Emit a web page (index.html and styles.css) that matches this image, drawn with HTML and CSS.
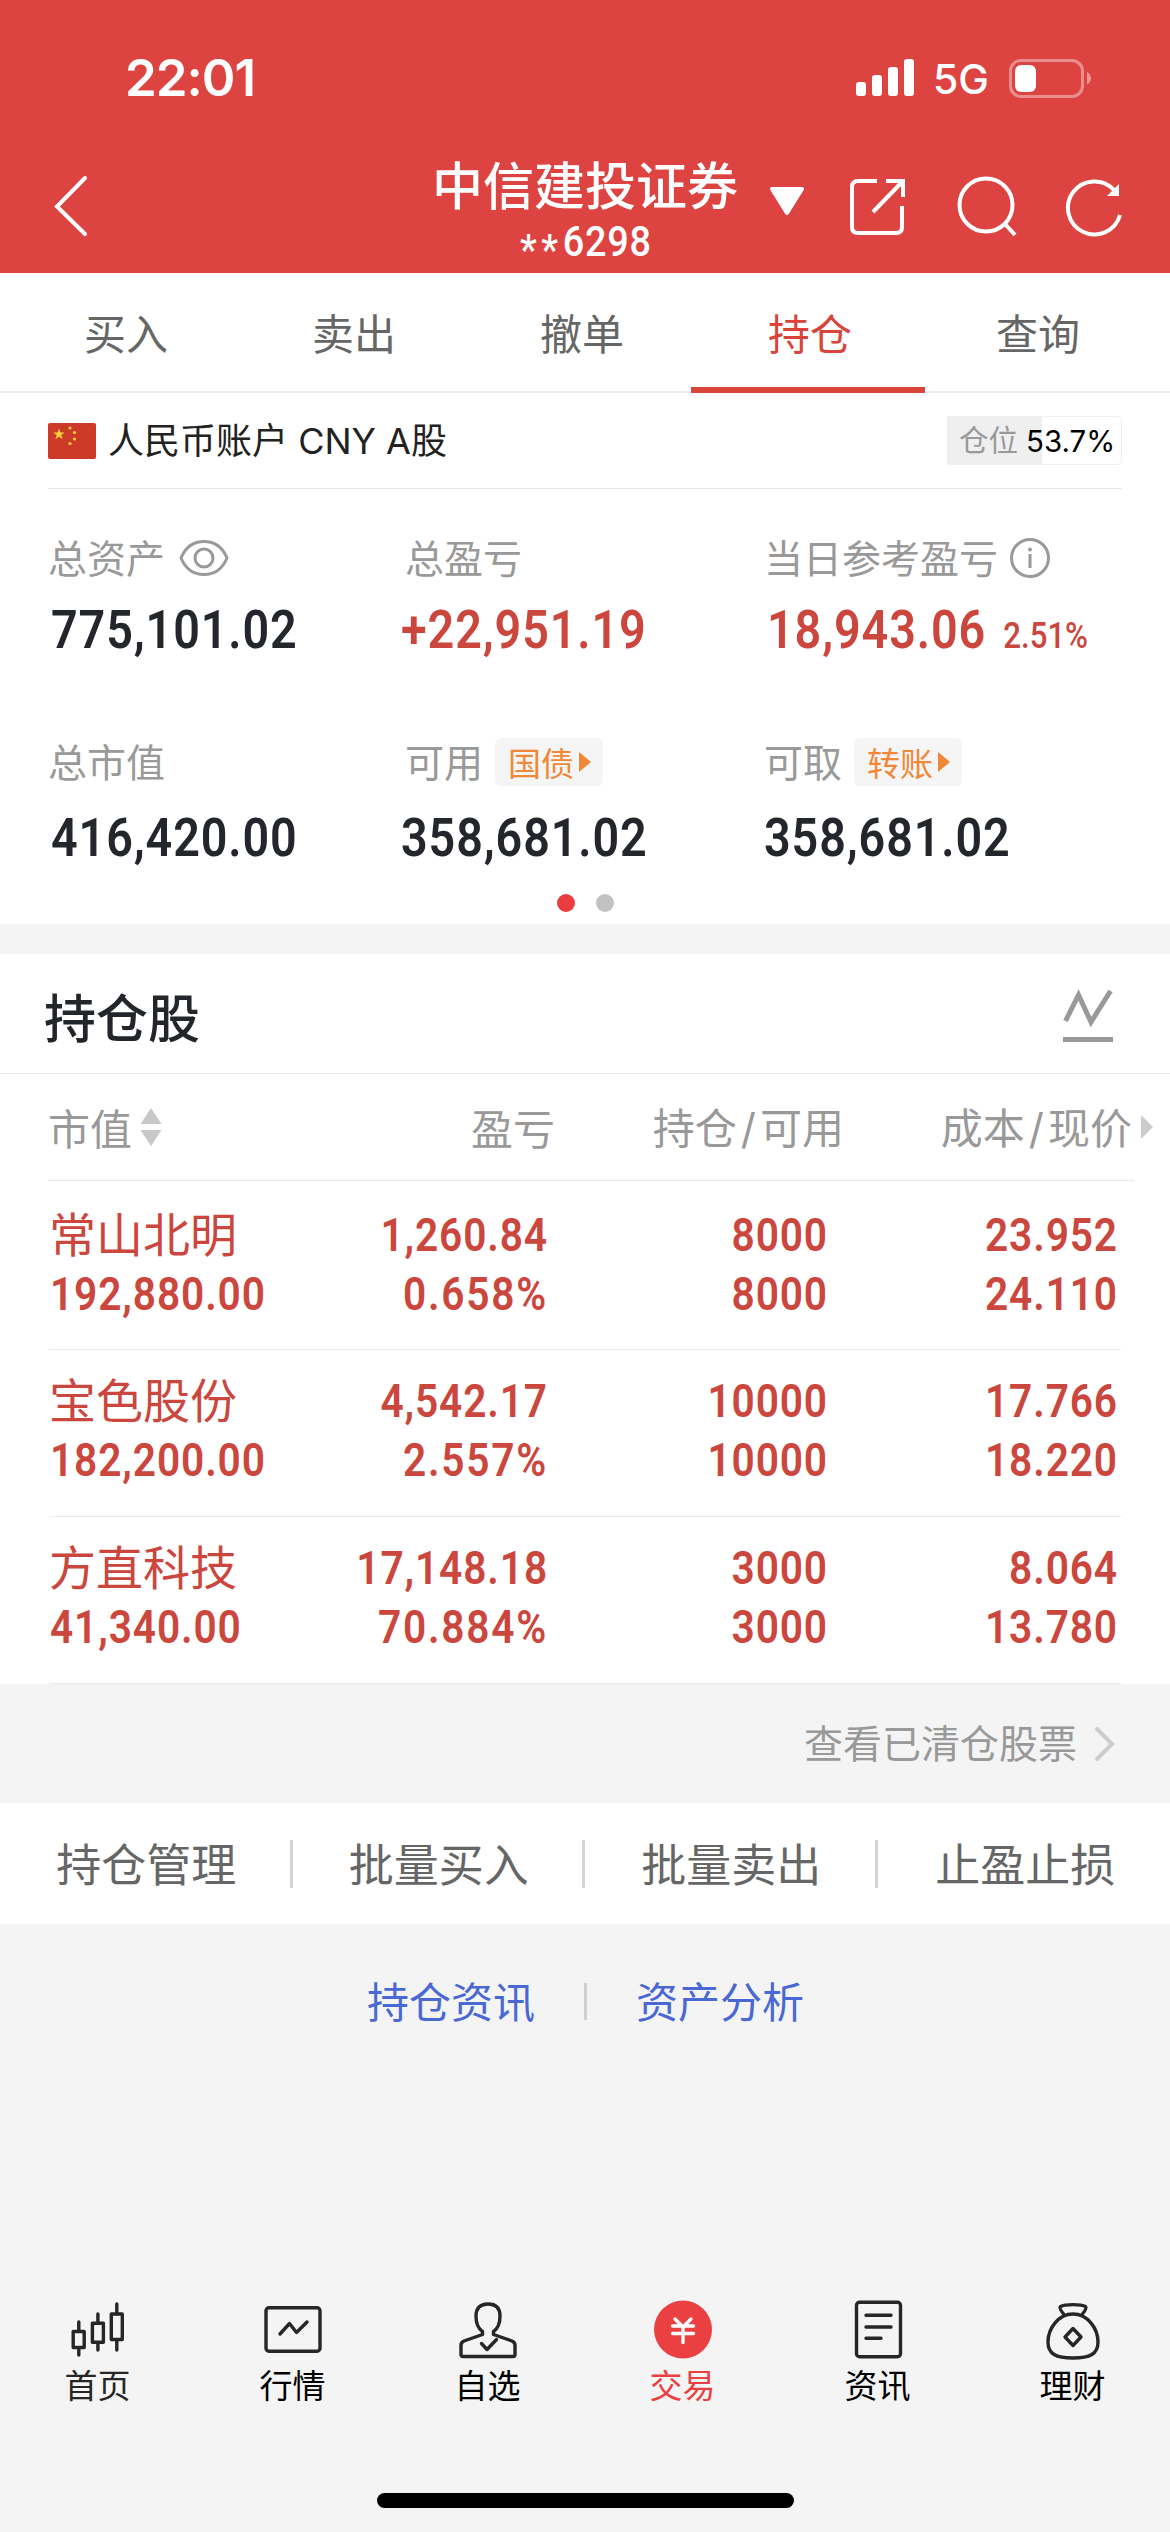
FILE: index.html
```html
<!DOCTYPE html>
<html lang="zh-CN">
<head>
<meta charset="utf-8">
<title>持仓</title>
<link rel="stylesheet" href="styles.css">
</head>
<body>
<div class="screen">
  <header class="top">
    <div class="status">
      <span class="time">22:01</span>
      <div class="status-right">
        <svg class="signal" width="58" height="38" viewBox="0 0 58 38" fill="#fff"><rect x="0" y="23" width="10" height="14" rx="3"/><rect x="16" y="16" width="10" height="21" rx="3"/><rect x="32" y="8" width="10" height="29" rx="3"/><rect x="48" y="0" width="10" height="37" rx="3"/></svg>
        <span class="net">5G</span>
        <svg width="83" height="39" viewBox="0 0 83 39"><rect x="1.5" y="1.5" width="72" height="36" rx="10.5" fill="none" stroke="#fff" stroke-opacity=".4" stroke-width="3"/><rect x="6" y="6" width="21" height="27" rx="6" fill="#fff"/><path d="M78 13c5.300 2.500 5.300 10 0 12.500z" fill="#fff" fill-opacity=".45"/></svg>
      </div>
    </div>
    <div class="titlebar">
      <svg class="back" width="36" height="64" viewBox="0 0 36 64" fill="none" stroke="#fff" stroke-width="4" stroke-linecap="round"><path d="M32 4L4 32.500L32 60"/></svg>
      <div class="title">
        <div class="broker">中信建投证券</div>
        <div class="acct num"><span class="mask">**</span>6298</div>
      </div>
      <svg class="caret" width="36" height="30" viewBox="0 0 36 30"><path d="M3 2h30L18 26z" fill="#fff" stroke="#fff" stroke-width="4" stroke-linejoin="round"/></svg>
      <div class="actions">
        <svg width="56" height="62" viewBox="0 0 56 62" fill="none" stroke="#fff" stroke-width="4"><path d="M28 6H9q-6 0-6 6v40q0 6 6 6h38q6 0 6-6V31"/><path d="M37 6h17v16M53 7L24 37"/></svg>
        <svg class="search" width="62" height="62" viewBox="0 0 62 62" fill="none" stroke="#fff" stroke-width="4"><circle cx="30" cy="30" r="26.500"/><path d="M49 49l10 11"/></svg>
        <svg width="60" height="62" viewBox="0 0 60 62"><path d="M56 40A26.500 26.500 0 1 1 50 15" fill="none" stroke="#fff" stroke-width="4"/><path d="M55 9v12H43z" fill="#fff"/></svg>
      </div>
    </div>
  </header>

  <nav class="tabs">
    <a class="tab">买入</a><a class="tab">卖出</a><a class="tab">撤单</a><a class="tab active">持仓</a><a class="tab">查询</a>
  </nav>

  <section class="account">
    <div class="account-head">
      <svg width="48" height="36" viewBox="0 0 48 36"><rect width="48" height="36" rx="2" fill="#cd3a27"/><g fill="#f7d33c"><path d="M11 5.500l1.500 4h4.200l-3.400 2.600 1.300 4.200-3.600-2.500-3.600 2.500 1.300-4.200-3.400-2.600h4.200z"/><circle cx="22" cy="5" r="1.600"/><circle cx="26.500" cy="9.500" r="1.600"/><circle cx="26.500" cy="16" r="1.600"/><circle cx="22" cy="20.500" r="1.600"/></g></svg>
      <span class="account-name">人民币账户 CNY A股</span>
      <div class="position"><span class="position-label">仓位</span><span class="position-value">53.7%</span></div>
    </div>
    <div class="stats">
      <div class="stat">
        <div class="label">总资产<svg class="eye" width="50" height="38" viewBox="0 0 50 38" fill="none" stroke="#999" stroke-width="3"><path d="M2 19C7 7 15 2.500 25 2.500S43 7 48 19C43 31 35 35.500 25 35.500S7 31 2 19z"/><circle cx="25" cy="19" r="9"/></svg></div>
        <div class="value num">775,101.02</div>
      </div>
      <div class="stat c2">
        <div class="label">总盈亏</div>
        <div class="value num up">+22,951.19</div>
      </div>
      <div class="stat">
        <div class="label">当日参考盈亏<svg class="info" width="42" height="42" viewBox="0 0 42 42"><circle cx="21" cy="21" r="18.500" fill="none" stroke="#999" stroke-width="3"/><circle cx="21" cy="12.500" r="2" fill="#999"/><path d="M21 17v14" stroke="#999" stroke-width="3"/></svg></div>
        <div class="value num up">18,943.06<span class="pct">2.51%</span></div>
      </div>
      <div class="stat low">
        <div class="label">总市值</div>
        <div class="value num">416,420.00</div>
      </div>
      <div class="stat low c2">
        <div class="label">可用<span class="tag">国债<i class="play"></i></span></div>
        <div class="value num">358,681.02</div>
      </div>
      <div class="stat low c3">
        <div class="label">可取<span class="tag">转账<i class="play"></i></span></div>
        <div class="value num">358,681.02</div>
      </div>
    </div>
    <div class="dots"><i class="dot on"></i><i class="dot"></i></div>
  </section>

  <section class="holdings">
    <div class="holdings-head">
      <h2>持仓股</h2>
      <svg width="52" height="54" viewBox="0 0 52 54" fill="none" stroke="#999" stroke-width="5"><path d="M3.500 32L16.500 6L29 33L48.500 2"/><path d="M1 50.500h50"/></svg>
    </div>
    <div class="cols">
      <span class="col-name">市值<svg width="22" height="40" viewBox="0 0 22 40" fill="#c8c8c8"><path d="M11 1l10.500 16H.5zM11 39L.5 23h21z"/></svg></span>
      <span>盈亏</span>
      <span>持仓<b>/</b>可用</span>
      <span>成本<b>/</b>现价</span>
      <i class="more"></i>
    </div>
    <div class="row first">
      <div class="cell"><div class="name">常山北明</div><div class="num">192,880.00</div></div>
      <div class="cell num"><div>1,260.84</div><div class="rate">0.658%</div></div>
      <div class="cell num"><div>8000</div><div>8000</div></div>
      <div class="cell num"><div>23.952</div><div>24.110</div></div>
    </div>
    <div class="row">
      <div class="cell"><div class="name">宝色股份</div><div class="num">182,200.00</div></div>
      <div class="cell num"><div>4,542.17</div><div class="rate">2.557%</div></div>
      <div class="cell num"><div>10000</div><div>10000</div></div>
      <div class="cell num"><div>17.766</div><div>18.220</div></div>
    </div>
    <div class="row">
      <div class="cell"><div class="name">方直科技</div><div class="num">41,340.00</div></div>
      <div class="cell num"><div>17,148.18</div><div class="rate">70.884%</div></div>
      <div class="cell num"><div>3000</div><div>3000</div></div>
      <div class="cell num"><div>8.064</div><div>13.780</div></div>
    </div>
  </section>

  <a class="cleared"><span>查看已清仓股票</span><svg width="22" height="38" viewBox="0 0 22 38" fill="none" stroke="#ccc" stroke-width="4"><path d="M2 3l16 16L2 35"/></svg></a>

  <nav class="ops"><a>持仓管理</a><a>批量买入</a><a>批量卖出</a><a>止盈止损</a></nav>

  <div class="links"><a>持仓资讯</a><i></i><a>资产分析</a></div>

  <footer class="bottom">
    <nav class="dock">
      <a class="soft"><svg width="60" height="60" viewBox="0 0 60 60"><rect x="5.200" y="31.500" width="11" height="16"/><path d="M10.800 22v9M10.800 48v7"/><rect x="24.400" y="23.300" width="11" height="19"/><path d="M29.900 14v9M29.900 43v7"/><rect x="43.300" y="14" width="11" height="25.500"/><path d="M48.800 4v10M48.800 40v10"/></svg>首页</a>
      <a><svg width="60" height="60" viewBox="0 0 60 60"><rect x="3" y="7.700" width="54" height="43.500" rx="3"/><path d="M17 34l9.500-10.500 7 9L44 22"/></svg>行情</a>
      <a><svg width="60" height="60" viewBox="0 0 60 60"><path d="M24.500 31.500Q18 27 18 16 18 4 30 4t12 12q0 11-6.500 15.500v3L54 41q3 1.500 3 4v9.500q0 2-2 2H5q-2 0-2-2V45q0-2.500 3-4l18.500-6.500z"/><path d="M23.500 43.500l5.500 6 9.500-10"/></svg>自选</a>
      <a class="current"><svg width="60" height="60" viewBox="0 0 60 60"><circle cx="30" cy="29.500" r="29" fill="#eb4042" stroke="none"/><path d="M22 19l8 8 8-8M19.500 26h21M19.500 33.500h21M30 26v16.500" stroke="#fff"/></svg>交易</a>
      <a><svg width="60" height="60" viewBox="0 0 60 60"><rect x="8.500" y="2.300" width="44" height="54.500" rx="3"/><path d="M18 15.300h25M18 27h25M18 38.300h15"/></svg>资讯</a>
      <a><svg width="60" height="60" viewBox="0 0 60 60"><path d="M21 14.500C18 11 16 8 17.500 6.500 22 4 38 4 42.500 6.500 44 8 42 11 39 14.500"/><path d="M30 14C15 14 5 29 5 42c0 12 8 16 25 16s25-4 25-16C55 29 45 14 30 14z"/><path d="M30 28.500l8 8.500-8 8.500-8-8.500z"/></svg>理财</a>
    </nav>
    <div class="home"></div>
  </footer>
</div>
</body>
</html>
```
FILE: styles.css
```css
* { box-sizing: border-box; }
body { margin: 0; background: #f4f4f4; font-family: "Noto Sans CJK SC", sans-serif; font-weight: 400; }
svg { display: block; flex: none; }
i { font-style: normal; }
.screen { width: 1170px; height: 2532px; display: flex; flex-direction: column; overflow: hidden; }
.num { font-family: Roboto, sans-serif; font-weight: 600; letter-spacing: .022em; white-space: nowrap; transform: scaleX(.865); transform-origin: 0 50%; }

.top { height: 273px; background: #dd4441; color: #fff; }
.status { height: 156px; padding: 0 78px 0 125px; display: flex; justify-content: space-between; align-items: center; }
.time { font: 600 51px/60px Inter, sans-serif; letter-spacing: -1px; }
.status-right { display: flex; align-items: center; }
.net { font: 500 41px/48px Inter, sans-serif; margin: 2px 20px 0 19px; }
.titlebar { height: 117px; display: grid; grid-template-columns: 380px 410px 59px 1fr; align-items: start; }
.back { margin: 18px 0 0 53px; }
.title { text-align: center; }
.broker { font-size: 51px; line-height: 54px; font-weight: 500; }
.acct.num { font-size: 42px; line-height: 44px; font-weight: 500; margin: 10px 0 0 2px; transform-origin: 50% 50%; transform: scaleX(.9); }
.mask { position: relative; top: 8px; letter-spacing: 5px; }
.caret { margin: 31px 0 0 -21px; }
.actions { display: flex; justify-content: space-between; padding: 19px 46px 0 0; }
.search { margin-left: 4px; }

.tabs { height: 120px; padding: 0 18px 0 12px; display: flex; border-bottom: 2px solid #eee; background: #fff; }
.tab { flex: 1; position: relative; text-align: center; font-size: 42px; line-height: 118px; color: #666; }
.tab.active { color: #d9443a; }
.tab.active::after { content: ""; position: absolute; left: -5px; right: -1px; bottom: -2px; height: 6px; background: #d9443a; }

.account { height: 531px; background: #fff; padding: 0 48px; }
.account-head { height: 96px; display: flex; align-items: center; border-bottom: 1px solid #e8e8e8; }
.account-name { font: 400 36px/48px Inter, "Noto Sans CJK SC", sans-serif; color: #222; margin-left: 12px; }
.position { margin-left: auto; width: 175px; height: 49px; display: flex; align-items: center; padding-left: 11px; border: 1px solid #efefef; border-radius: 0 5px 5px 0; background: linear-gradient(90deg, #efefef 94px, #fff 94px); font-size: 29.5px; line-height: 44px; }
.position-label { color: #999; padding-bottom: 5px; }
.position-value { font-family: Inter, sans-serif; color: #000; margin-left: 8px; }
.stats { display: grid; grid-template-columns: 357px 359px 1fr; }
.stat { height: 204px; padding-top: 41px; }
.label { height: 52px; display: flex; align-items: center; font-size: 39px; line-height: 52px; color: #999; white-space: nowrap; }
.eye { margin: 4px 0 0 14px; }
.info { margin: 4px 0 0 11px; }
.value { font-size: 54px; line-height: 64px; margin: 16px 0 0 3px; color: #23262b; letter-spacing: .019em; }
.low .value { margin-top: 20px; }
.c2 .value { margin-left: -4px; }
.c3 .value { margin-left: 0; }
.value.up { color: #cb463d; }
.pct { font-size: 36px; font-weight: 500; margin-left: 20px; letter-spacing: 0; }
.tag { height: 48px; margin: 4px 0 0 12px; padding: 0 12px 0 13px; display: flex; align-items: center; gap: 5px; border-radius: 6px; background: #f5f5f5; color: #f08838; font-size: 33px; line-height: 46px; }
.play { width: 12px; height: 20px; background: #f08838; clip-path: polygon(0 0, 100% 50%, 0 100%); }
.dots { display: flex; justify-content: center; gap: 21px; margin: -3px 0 0 1px; }
.dot { width: 18px; height: 18px; border-radius: 50%; background: #c2c2c2; }
.dot.on { background: #eb3d40; }

.holdings { margin-top: 30px; background: #fff; }
.holdings-head { height: 120px; padding: 5px 56px 0 44px; display: flex; align-items: center; justify-content: space-between; border-bottom: 1px solid #e8e8e8; }
h2 { margin: 0; font-size: 52px; line-height: 60px; font-weight: 500; color: #22252a; }
.cols { height: 107px; margin: 0 36px 0 48px; display: grid; grid-template-columns: 207px 300px 289px 288px 12px; align-items: center; border-bottom: 1px solid #e8e8e8; color: #999; font-size: 42px; line-height: 60px; text-align: right; white-space: nowrap; }
.col-name { display: flex; align-items: center; gap: 8px; }
.cols b { font: 400 42px/60px Inter, sans-serif; padding: 0 4px; }
.more { width: 12px; height: 24px; margin-left: 9px; background: #ccc; clip-path: polygon(0 0, 100% 50%, 0 100%); }
.row { height: 167px; margin: 0 49px; padding-top: 21px; display: grid; grid-template-columns: 220px 279px 280px 290px; border-bottom: 1px solid #e8e8e8; color: #cb463d; font-size: 47px; }
.row.first { height: 169px; padding-top: 24px; }
.cell { text-align: right; line-height: 59px; }
.cell.num { transform-origin: 100% 50%; }
.cell:first-child { text-align: left; }
.cell:first-child .num { margin-left: 1px; }
.rate { letter-spacing: .043em; }
.name { font-size: 47px; line-height: 54px; padding-bottom: 5px; }

.cleared { height: 119px; padding-right: 54px; display: flex; align-items: center; justify-content: flex-end; gap: 17px; color: #999; font-size: 39px; }
.cleared span { padding-bottom: 5px; }
.ops { height: 121px; display: grid; grid-template-columns: repeat(4, 1fr); align-items: center; background: #fff; }
.ops a { text-align: center; font-size: 45px; line-height: 46px; padding: 0 0 2px 3px; color: #666; }
.ops a:not(:last-child) { border-right: 3px solid #d5d5d5; }
.links { height: 155px; display: flex; align-items: center; justify-content: center; gap: 49px; padding-left: 1px; color: #4a68d4; font-size: 42px; }
.links a { padding-bottom: 5px; }
.links i { width: 3px; height: 37px; background: #d0d0d0; }

.bottom { margin-top: auto; height: 232px; }
.dock { height: 193px; display: grid; grid-template-columns: repeat(6, 1fr); }
.dock a { display: flex; flex-direction: column; align-items: center; font-size: 33px; line-height: 48px; color: #000; }
.dock svg { fill: none; stroke: #262626; stroke-width: 3.400px; stroke-linecap: round; stroke-linejoin: round; }
.dock .soft { color: #262626; }
.dock .current { color: #eb4042; }
.home { width: 417px; height: 15px; margin: 0 auto; border-radius: 8px; background: #000; }
```
